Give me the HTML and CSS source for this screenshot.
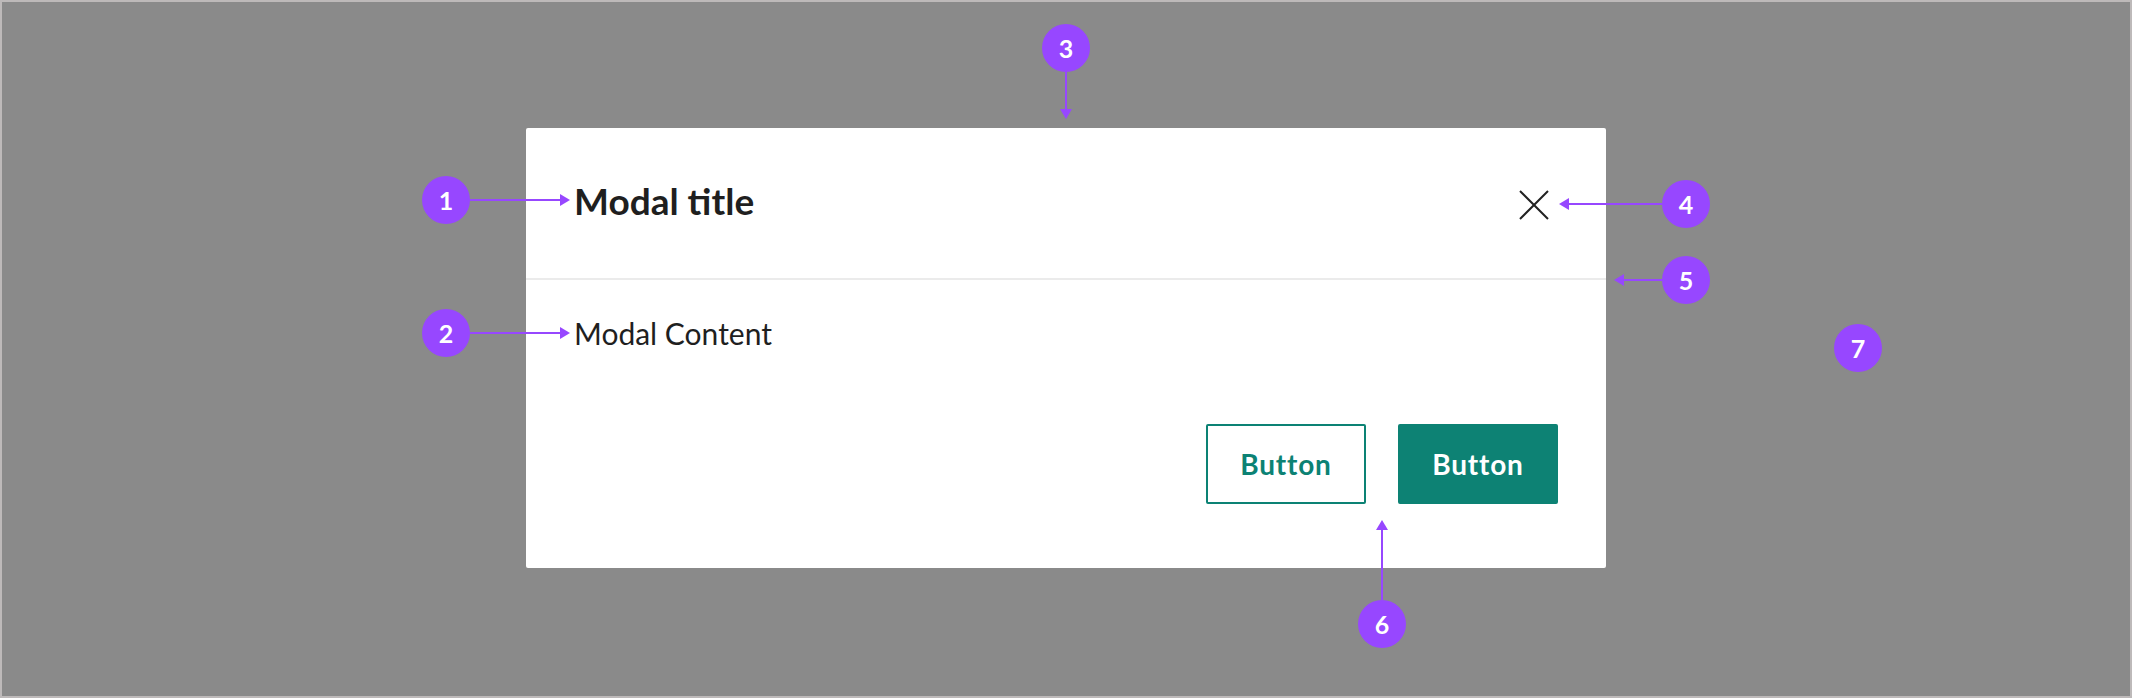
FILE: index.html
```html
<!DOCTYPE html>
<html lang="en">
<head>
<meta charset="utf-8">
<title>Modal anatomy</title>
<link rel="stylesheet" href="styles.css">
</head>
<body>
<div class="overlay">
  <div class="modal">
    <div class="modal-header">
      <h2 class="modal-title">Modal title</h2>
      <button class="close-btn" aria-label="Close">
        <svg width="30" height="30" viewBox="0 0 30 30"><path d="M1 1 L29 29 M29 1 L1 29" stroke="#222" stroke-width="2" fill="none"/></svg>
      </button>
    </div>
    <div class="modal-body">Modal Content</div>
    <div class="modal-footer">
      <button class="btn btn-outline">Button</button>
      <button class="btn btn-primary">Button</button>
    </div>
  </div>

  <svg class="arrows" width="2132" height="698" viewBox="0 0 2132 698">
    <g stroke="#9747ff" stroke-width="2" fill="none">
      <line x1="470" y1="200" x2="561" y2="200"/>
      <line x1="470" y1="333" x2="561" y2="333"/>
      <line x1="1066" y1="71" x2="1066" y2="110"/>
      <line x1="1662" y1="204" x2="1568" y2="204"/>
      <line x1="1662" y1="280" x2="1623" y2="280"/>
      <line x1="1382" y1="600" x2="1382" y2="529"/>
    </g>
    <g fill="#9747ff">
      <polygon points="560,194 570,200 560,206"/>
      <polygon points="560,327 570,333 560,339"/>
      <polygon points="1060,109 1072,109 1066,119"/>
      <polygon points="1569,198 1559,204 1569,210"/>
      <polygon points="1624,274 1614,280 1624,286"/>
      <polygon points="1376,530 1388,530 1382,520"/>
    </g>
  </svg>

  <span class="badge b1">1</span>
  <span class="badge b2">2</span>
  <span class="badge b3">3</span>
  <span class="badge b4">4</span>
  <span class="badge b5">5</span>
  <span class="badge b6">6</span>
  <span class="badge b7">7</span>
</div>
</body>
</html>
```

FILE: styles.css
```css
* { box-sizing: border-box; }
html, body { margin: 0; padding: 0; }
body {
  font-family: "Lato", "Liberation Sans", sans-serif;
  background: #bdb9b9;
  overflow: hidden;
}
.overlay {
  position: relative;
  width: 2132px;
  height: 698px;
  border: 2px solid #bdb9b9;
  background: #8a8a8a;
  display: flex;
  justify-content: center;
  align-items: flex-start;
  padding-top: 126px;
}
.modal {
  width: 1080px;
  height: 440px;
  background: #fff;
  border-radius: 2px;
  display: flex;
  flex-direction: column;
}
.modal-header {
  height: 152px;
  border-bottom: 2px solid #ebebeb;
  display: flex;
  align-items: center;
  justify-content: space-between;
  padding: 0 48px 0 48px;
}
.modal-title {
  margin: 0 0 5px 0;
  font-size: 37px;
  font-weight: 700;
  color: #1f1f1f;
  line-height: 1;
}
.close-btn {
  width: 48px;
  height: 48px;
  border: 0;
  padding: 0;
  background: transparent;
  display: flex;
  align-items: center;
  justify-content: center;
  margin-top: 3px;
}
.close-btn svg { display: block; }
.modal-body {
  flex: 1;
  padding: 33px 48px 0 48px;
  font-size: 30px;
  line-height: 40px;
  color: #1f1f1f;
}
.modal-footer {
  display: flex;
  justify-content: flex-end;
  gap: 32px;
  padding: 0 48px 64px 48px;
}
.btn {
  width: 160px;
  height: 80px;
  border-radius: 2px;
  font-family: "Lato", "Liberation Sans", sans-serif;
  font-size: 28px;
  letter-spacing: 0.8px;
  font-weight: 700;
  padding: 0;
  cursor: pointer;
}
.btn-outline {
  background: #fff;
  border: 2px solid #0c8274;
  color: #0c8274;
}
.btn-primary {
  background: #0d8274;
  border: 2px solid #0d8274;
  color: #fff;
}
.arrows {
  position: absolute;
  left: -2px;
  top: -2px;
  pointer-events: none;
}
.badge {
  position: absolute;
  width: 48px;
  height: 48px;
  border-radius: 50%;
  background: #9747ff;
  color: #fff;
  font-size: 25px;
  font-weight: 700;
  display: flex;
  align-items: center;
  justify-content: center;
  line-height: 1;
}
.b1 { left: 420px; top: 174px; }
.b2 { left: 420px; top: 307px; }
.b3 { left: 1040px; top: 22px; }
.b4 { left: 1660px; top: 178px; }
.b5 { left: 1660px; top: 254px; }
.b6 { left: 1356px; top: 598px; }
.b7 { left: 1832px; top: 322px; }
```
